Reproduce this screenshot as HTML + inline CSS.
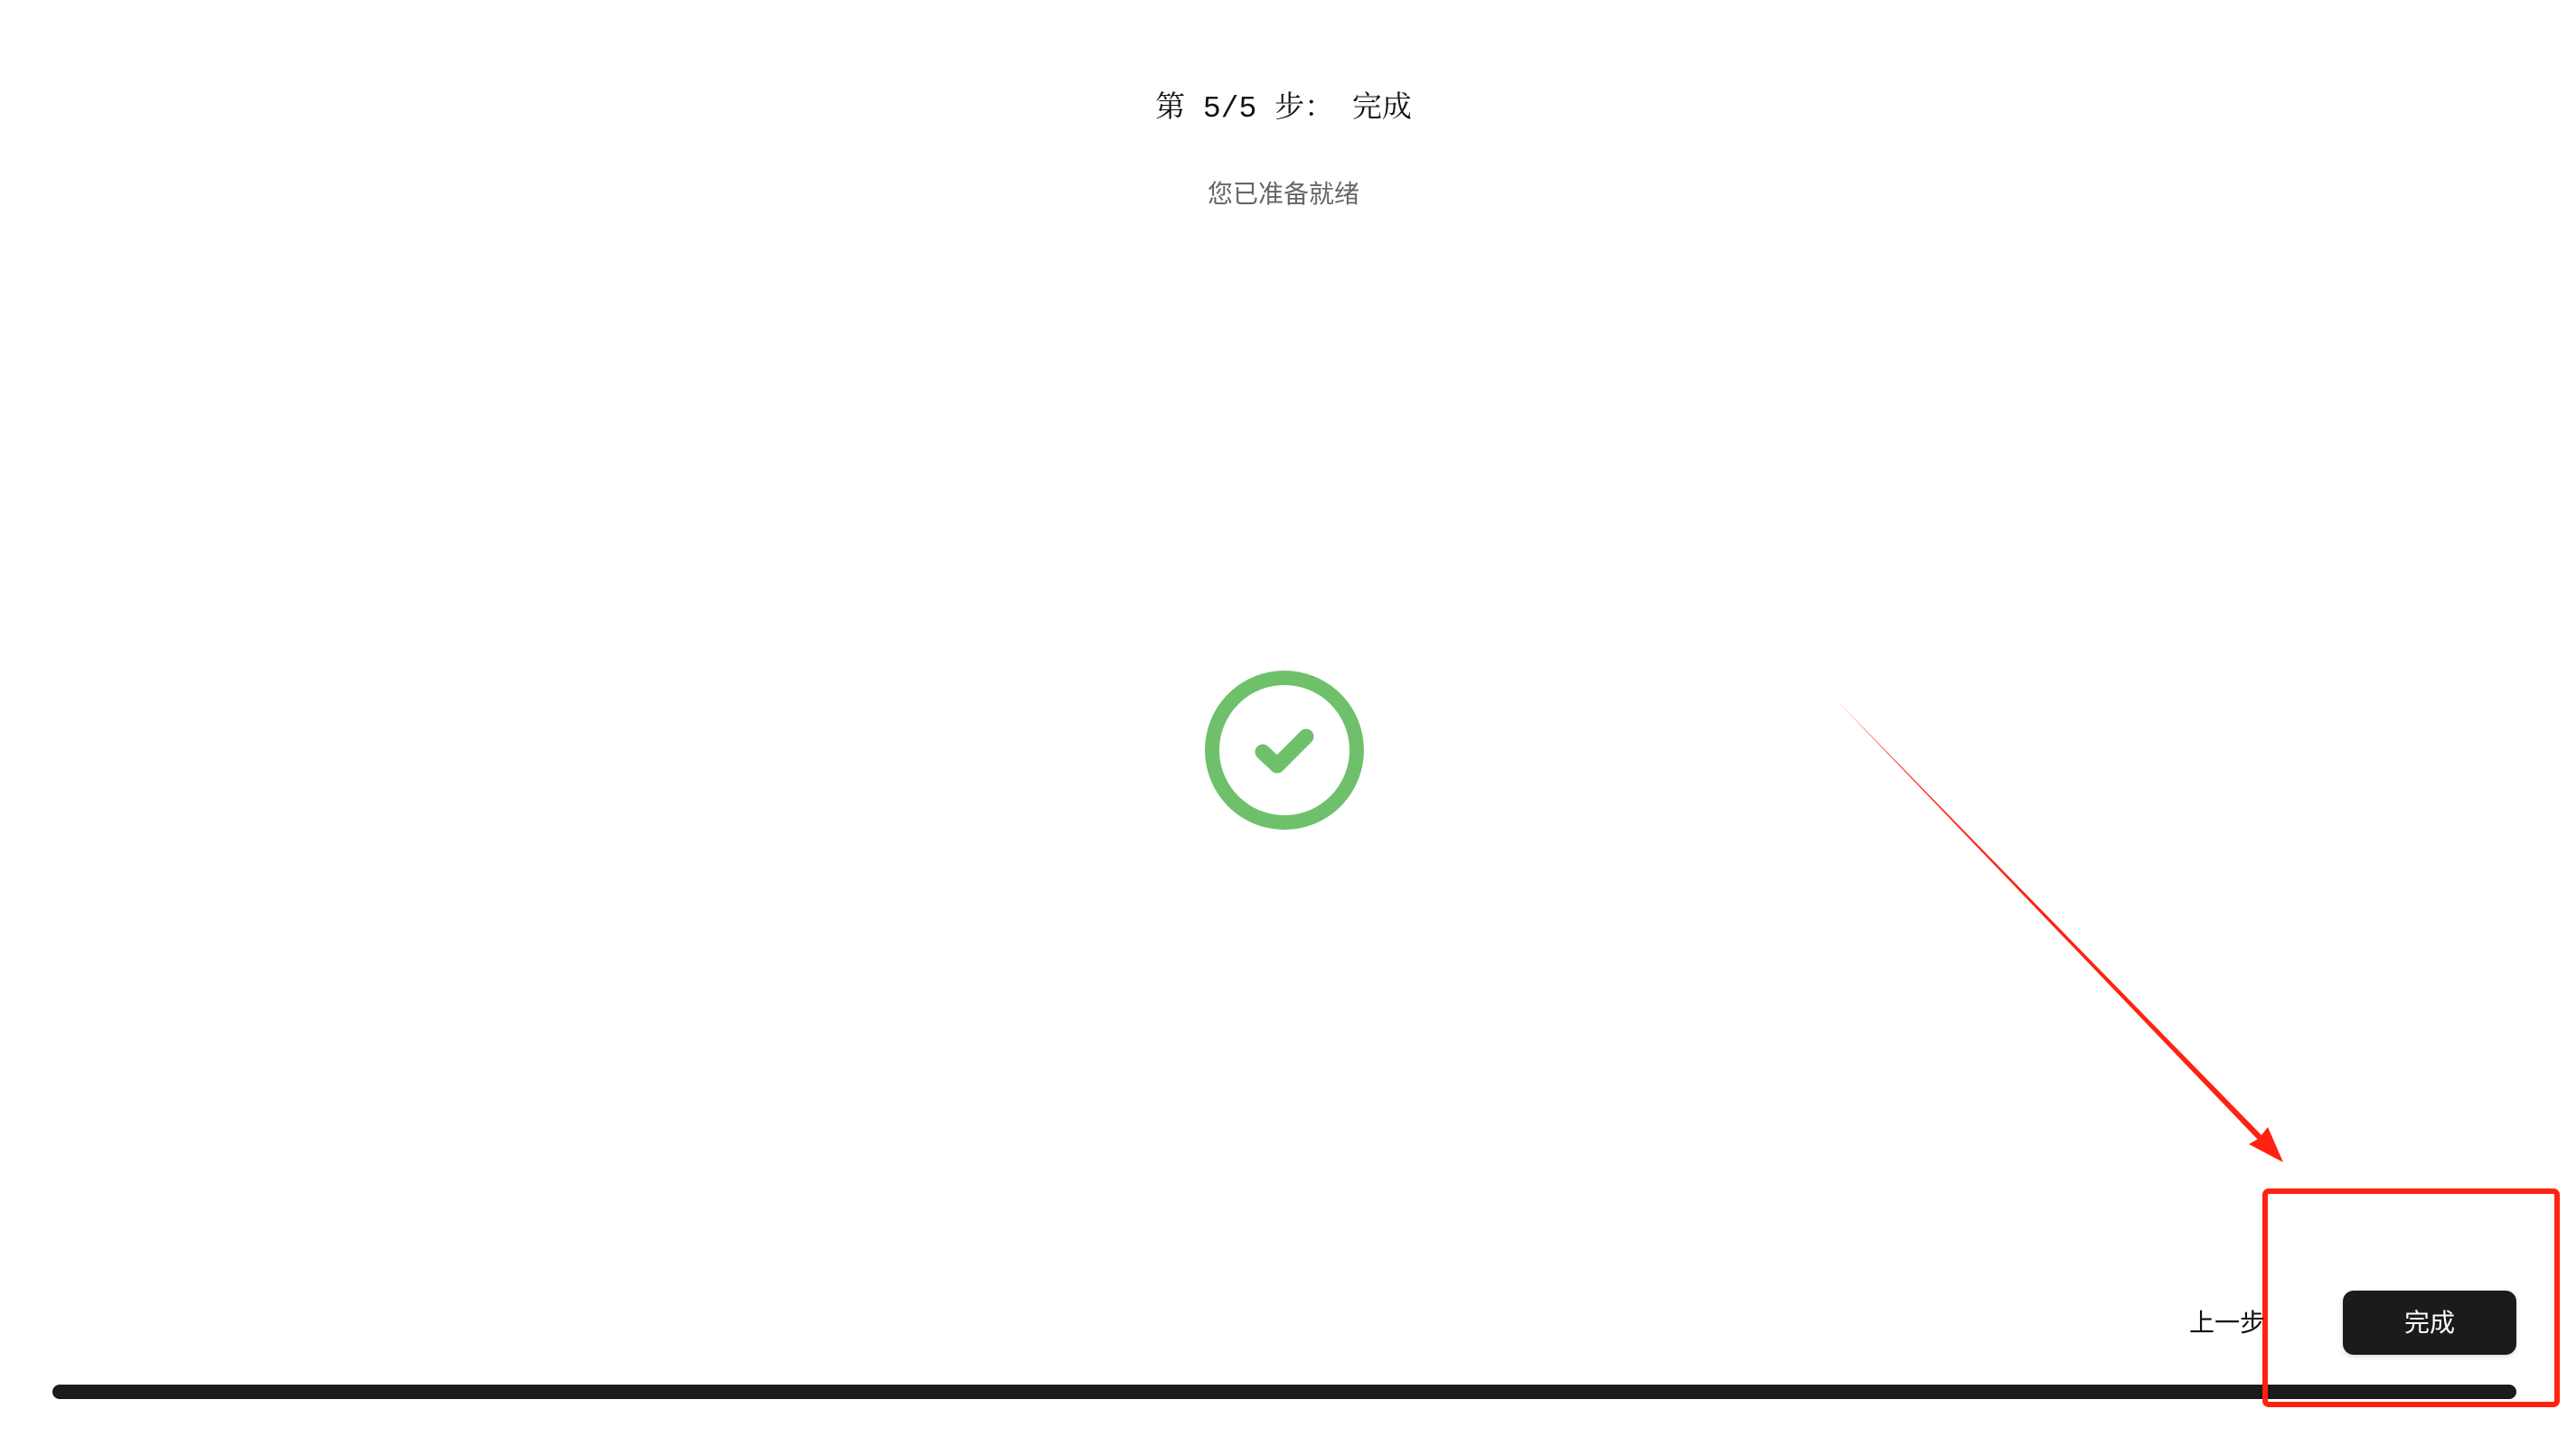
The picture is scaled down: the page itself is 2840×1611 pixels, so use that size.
<!DOCTYPE html>
<html><head><meta charset="utf-8"><style>
html,body{margin:0;padding:0;width:2840px;height:1611px;background:#fff;overflow:hidden;position:relative}
.t{position:absolute;left:0;width:2840px;text-align:center}
</style></head><body>
<div class="t" style="top:97px;font-size:33px;line-height:48px;color:#111;font-family:'Liberation Mono','Noto Serif CJK SC',monospace;white-space:pre;">第 5/5 步： 完成</div>
<div class="t" style="top:196px;font-size:28px;line-height:38px;color:#666;font-family:'Liberation Sans','Noto Sans CJK SC',sans-serif;">您已准备就绪</div>
<svg width="2840" height="1611" style="position:absolute;left:0;top:0">
<circle cx="1421" cy="830" r="80" fill="none" stroke="#6ec16a" stroke-width="16"/>
<polyline points="1397,832 1413,847 1445,815" fill="none" stroke="#6ec16a" stroke-width="17" stroke-linecap="round" stroke-linejoin="round"/>
<rect x="58" y="1532" width="2726" height="16" rx="8" fill="#1b1b1d"/>
<rect x="2592" y="1428" width="192" height="71" rx="12" fill="#1b1b1d" style="filter:drop-shadow(0 2px 3px rgba(0,0,0,.15))"/>
<polygon points="2032,775 2502,1256 2509,1247 2526,1286 2488,1266 2497.5,1260.5" fill="#ff2211"/>
<rect x="2506" y="1318" width="323" height="236" rx="4" fill="none" stroke="#ff2211" stroke-width="6"/>
</svg>
<div style="position:absolute;left:2592px;top:1428px;width:192px;height:71px;line-height:71px;text-align:center;color:#fff;font-size:28px;font-family:'Liberation Sans','Noto Sans CJK SC',sans-serif;">完成</div>
<div style="position:absolute;left:2422px;top:1445px;font-size:28px;line-height:38px;color:#111;font-family:'Liberation Sans','Noto Sans CJK SC',sans-serif;">上一步</div>
</body></html>
